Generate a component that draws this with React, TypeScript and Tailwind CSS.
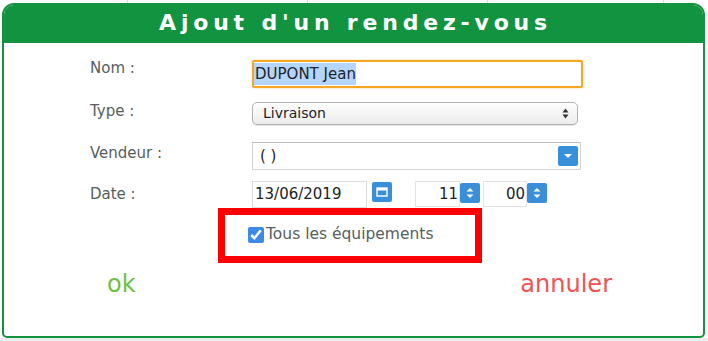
import React from 'react';

const green = 'bg-[#12933f]';

// blue square button next to inputs
function BlueButton({ kind }: { kind: 'down' | 'cal' | 'spin' }) {
  return (
    <div className="flex items-center justify-center w-[20px] h-[20px] bg-[#3a8fd9] rounded-[2px]">
      {kind === 'down' && (
        <svg width="10" height="6" viewBox="0 0 10 6">
          <path d="M1 1h8L5 5z" fill="#fff" />
        </svg>
      )}
      {kind === 'cal' && (
        <svg width="12" height="10" viewBox="0 0 12 10">
          <rect x="1" y="1" width="10" height="8" fill="none" stroke="#fff" strokeWidth="1.4" />
          <rect x="1" y="1" width="10" height="2.5" fill="#fff" />
        </svg>
      )}
      {kind === 'spin' && (
        <svg width="10" height="14" viewBox="0 0 10 14">
          <path d="M1.5 5.5L5 2l3.5 3.5z" fill="#fff" />
          <path d="M1.5 8.5L5 12l3.5-3.5z" fill="#fff" />
        </svg>
      )}
    </div>
  );
}

export default function App() {
  return (
    <div
      className="relative w-[708px] h-[341px] bg-white overflow-hidden"
      style={{ fontFamily: '"DejaVu Sans", Verdana, sans-serif' }}
    >
      {/* calendar grid behind the modal */}
      <div className="absolute inset-0 flex">
        <div className="w-[128px] h-full border-r border-[#d9d9d9]" />
        <div className="w-[180px] h-full border-r border-[#d9d9d9]" />
        <div className="w-[180px] h-full border-r border-[#d9d9d9]" />
        <div className="w-[176px] h-full border-r border-[#d9d9d9]" />
        <div className="flex-1 h-full" />
      </div>
      <div className="absolute left-0 right-0 bottom-0 h-[3px] bg-[#ececec]" />

      <div className="relative ml-[2px] mt-[3px] w-[703px] h-[335px] border-2 border-[#12933f] rounded-t-[12px] rounded-b-[5px] bg-white overflow-hidden">
        <div className={`${green} h-[38px] flex items-center justify-center`}>
          <h1 className="text-white font-bold text-[22px] tracking-[4.8px] leading-none -mt-[3px] ml-[4px]">
            Ajout d'un rendez-vous
          </h1>
        </div>

        <div className="pl-[86px] pt-[17px] text-[15px] text-[#566060]">
          {/* Nom */}
          <div className="flex h-[28px]">
            <div className="w-[162px] pt-[1px] leading-none">Nom :</div>
            <div className="w-[331px] h-[28px] border-2 border-[#f5a623] rounded-[2px] shadow-[0_0_2px_#f8c878] flex items-center text-[#1d2326]">
              <span className="bg-[#b4d5fd] leading-[22px] pl-[1px]">DUPONT Jean</span>
            </div>
          </div>

          {/* Type */}
          <div className="flex h-[23px] mt-[14px]">
            <div className="w-[162px] pt-[2px] leading-none">Type :</div>
            <div className="w-[326px] h-[23px] border border-[#b3b3b3] rounded-[5px] bg-gradient-to-b from-white to-[#ececec] flex items-center justify-between pl-[10px] pr-[8px] text-[14px] text-[#1d2326] shadow-[0_1px_1px_rgba(0,0,0,0.12)]">
              <span>Livraison</span>
              <svg width="7" height="11" viewBox="0 0 7 11">
                <path d="M0.5 4.5L3.5 0.5l3 4z" fill="#333" />
                <path d="M0.5 6.5L3.5 10.5l3-4z" fill="#333" />
              </svg>
            </div>
          </div>

          {/* Vendeur */}
          <div className="flex h-[28px] mt-[17px]">
            <div className="w-[162px] pt-[4px] leading-none">Vendeur :</div>
            <div className="w-[329px] h-[28px] border border-[#d4d4d4] border-t-[#bdbdbd] flex items-center justify-between pl-[7px] pr-[2px] text-[#1d2326]">
              <span>( )</span>
              <BlueButton kind="down" />
            </div>
          </div>

          {/* Date */}
          <div className="flex h-[27px] mt-[11px]">
            <div className="w-[162px] pt-[6px] leading-none">Date :</div>
            <div className="flex items-start">
              <div className="w-[115px] h-[27px] border border-[#dcdcdc] flex items-center pl-[2px] text-[#1d2326]">
                13/06/2019
              </div>
              <div className="ml-[5px] mt-[1px]">
                <BlueButton kind="cal" />
              </div>
              <div className="ml-[23px] flex items-start">
                <div className="w-[45px] h-[26px] border border-[#e2e2e2] flex items-center justify-end pr-[1px] text-[#1d2326]">
                  11
                </div>
                <div className="mt-[2px]">
                  <BlueButton kind="spin" />
                </div>
              </div>
              <div className="ml-[3px] flex items-start">
                <div className="w-[44px] h-[26px] border border-[#e2e2e2] flex items-center justify-end pr-[1px] text-[#1d2326]">
                  00
                </div>
                <div className="mt-[2px]">
                  <BlueButton kind="spin" />
                </div>
              </div>
            </div>
          </div>
        </div>

        {/* highlighted checkbox */}
        <div className="ml-[214px] w-[264px] h-[55px] border-[7px] border-[#ff0000] flex items-center pl-[23px] pb-[2px]">
          <input
            type="checkbox"
            defaultChecked
            className="w-[16px] h-[16px] m-0 accent-[#3b8be6]"
          />
          <span className="ml-[2px] text-[15.5px] text-[#566060] leading-none">Tous les équipements</span>
        </div>

        <div className="flex justify-between pl-[103px] pr-[91px] mt-[9px] text-[24px] leading-none">
          <span className="text-[#6fbf43]">ok</span>
          <span className="text-[#f05454]">annuler</span>
        </div>
      </div>
    </div>
  );
}
